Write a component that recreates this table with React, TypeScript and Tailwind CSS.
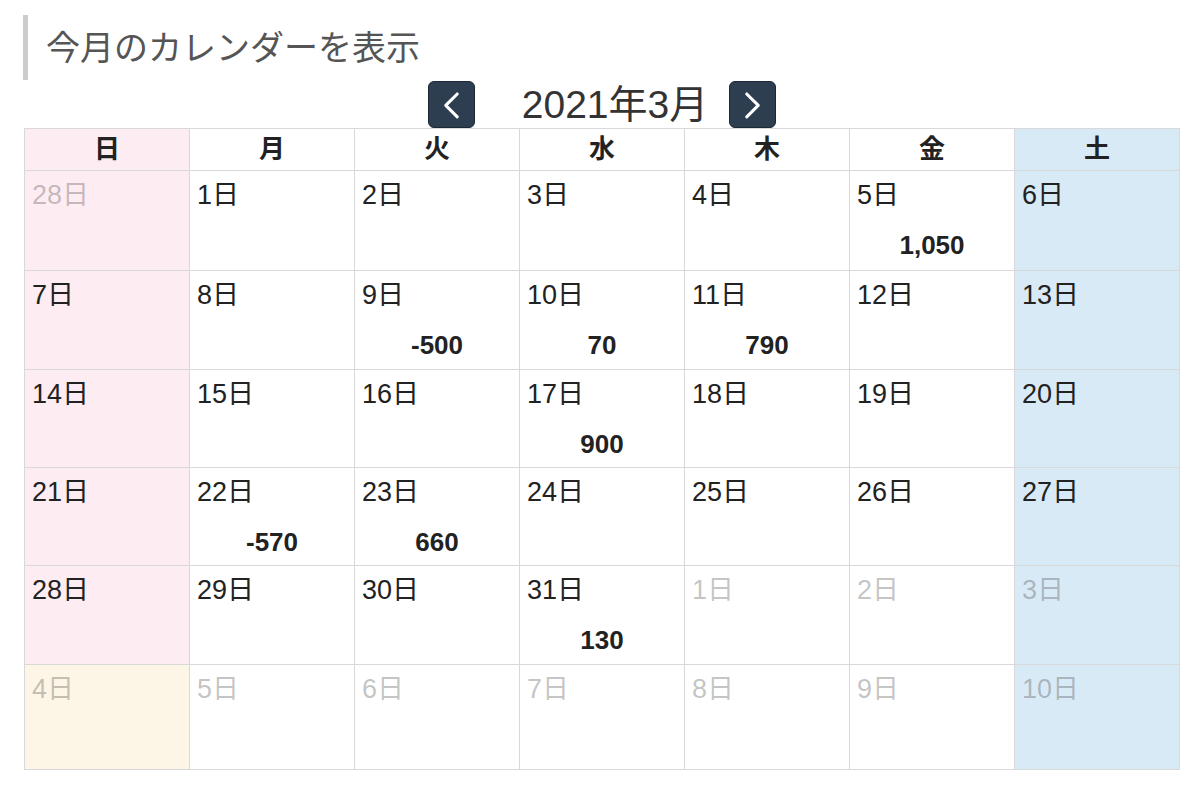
import React from "react";

type Cell = { d: number; other?: boolean; amt?: string };

const rows: Cell[][] = [
  [{ d: 28, other: true }, { d: 1 }, { d: 2 }, { d: 3 }, { d: 4 }, { d: 5, amt: "1,050" }, { d: 6 }],
  [{ d: 7 }, { d: 8 }, { d: 9, amt: "-500" }, { d: 10, amt: "70" }, { d: 11, amt: "790" }, { d: 12 }, { d: 13 }],
  [{ d: 14 }, { d: 15 }, { d: 16 }, { d: 17, amt: "900" }, { d: 18 }, { d: 19 }, { d: 20 }],
  [{ d: 21 }, { d: 22, amt: "-570" }, { d: 23, amt: "660" }, { d: 24 }, { d: 25 }, { d: 26 }, { d: 27 }],
  [{ d: 28 }, { d: 29 }, { d: 30 }, { d: 31, amt: "130" }, { d: 1, other: true }, { d: 2, other: true }, { d: 3, other: true }],
  [
    { d: 4, other: true },
    { d: 5, other: true },
    { d: 6, other: true },
    { d: 7, other: true },
    { d: 8, other: true },
    { d: 9, other: true },
    { d: 10, other: true },
  ],
];

const rowHeights = ["h-[99px]", "h-[98px]", "h-[97px]", "h-[97px]", "h-[98px]", "h-[104px]"];

const days = ["日", "月", "火", "水", "木", "金", "土"];

function bgFor(col: number, ri: number) {
  if (ri === 5 && col === 0) return "bg-[#fdf5e6]";
  if (col === 0) return "bg-[#fdedf3]";
  if (col === 6) return "bg-[#d9eaf7]";
  return "bg-white";
}

function headBg(col: number) {
  if (col === 0) return "bg-[#fdedf3]";
  if (col === 6) return "bg-[#d9eaf7]";
  return "bg-white";
}

export default function App() {
  return (
    <div
      className="w-[1200px] h-[788px] bg-white pt-[15px]"
      style={{ fontFamily: '"Liberation Sans", "Noto Sans CJK JP", sans-serif' }}
    >
      <div className="ml-[23px] h-[65px] border-l-[5px] border-[#cccccc] flex items-center pl-[18px]">
        <h2 className="text-[34px] leading-none text-[#555555] font-normal">今月のカレンダーを表示</h2>
      </div>

      <div className="ml-[24px] w-[1156px] mt-[1px]">
        <div className="h-[47px] flex items-center justify-center">
          <button className="w-[47px] h-[47px] rounded-[6px] bg-[#2c3e50] border border-[#1c2834] flex items-center justify-center p-0">
            <svg width="47" height="47" viewBox="0 0 47 47">
              <polyline
                points="29.5,12.5 17.5,24.5 29.5,36.5"
                fill="none"
                stroke="white"
                strokeWidth="3.2"
                strokeLinecap="round"
                strokeLinejoin="round"
              />
            </svg>
          </button>
          <div className="ml-[47px] mr-[21px] text-[39px] leading-none text-[#333333]">2021年3月</div>
          <button className="w-[47px] h-[47px] rounded-[6px] bg-[#2c3e50] border border-[#1c2834] flex items-center justify-center p-0">
            <svg width="47" height="47" viewBox="0 0 47 47">
              <polyline
                points="17.5,12.5 29.5,24.5 17.5,36.5"
                fill="none"
                stroke="white"
                strokeWidth="3.2"
                strokeLinecap="round"
                strokeLinejoin="round"
              />
            </svg>
          </button>
        </div>

        <div className="grid grid-cols-7 gap-[1px] bg-[#d9d9d9] p-[1px]">
          {days.map((d, i) => (
            <div
              key={d}
              className={`${headBg(i)} h-[41px] flex items-center justify-center text-[26px] font-bold text-[#222222]`}
            >
              {d}
            </div>
          ))}
          {rows.map((row, ri) =>
            row.map((c, ci) => (
              <div key={`${ri}-${ci}`} className={`${bgFor(ci, ri)} ${rowHeights[ri]} pt-[9px] px-[7px]`}>
                <div
                  className={`text-[27px] leading-[30px] ${c.other ? "text-[#333333]/30" : "text-[#222222]"}`}
                >
                  {c.d}日
                </div>
                {c.amt && (
                  <div className="mt-[20px] text-center text-[26px] leading-[30px] font-bold text-[#222222]">
                    {c.amt}
                  </div>
                )}
              </div>
            ))
          )}
        </div>
      </div>
    </div>
  );
}
